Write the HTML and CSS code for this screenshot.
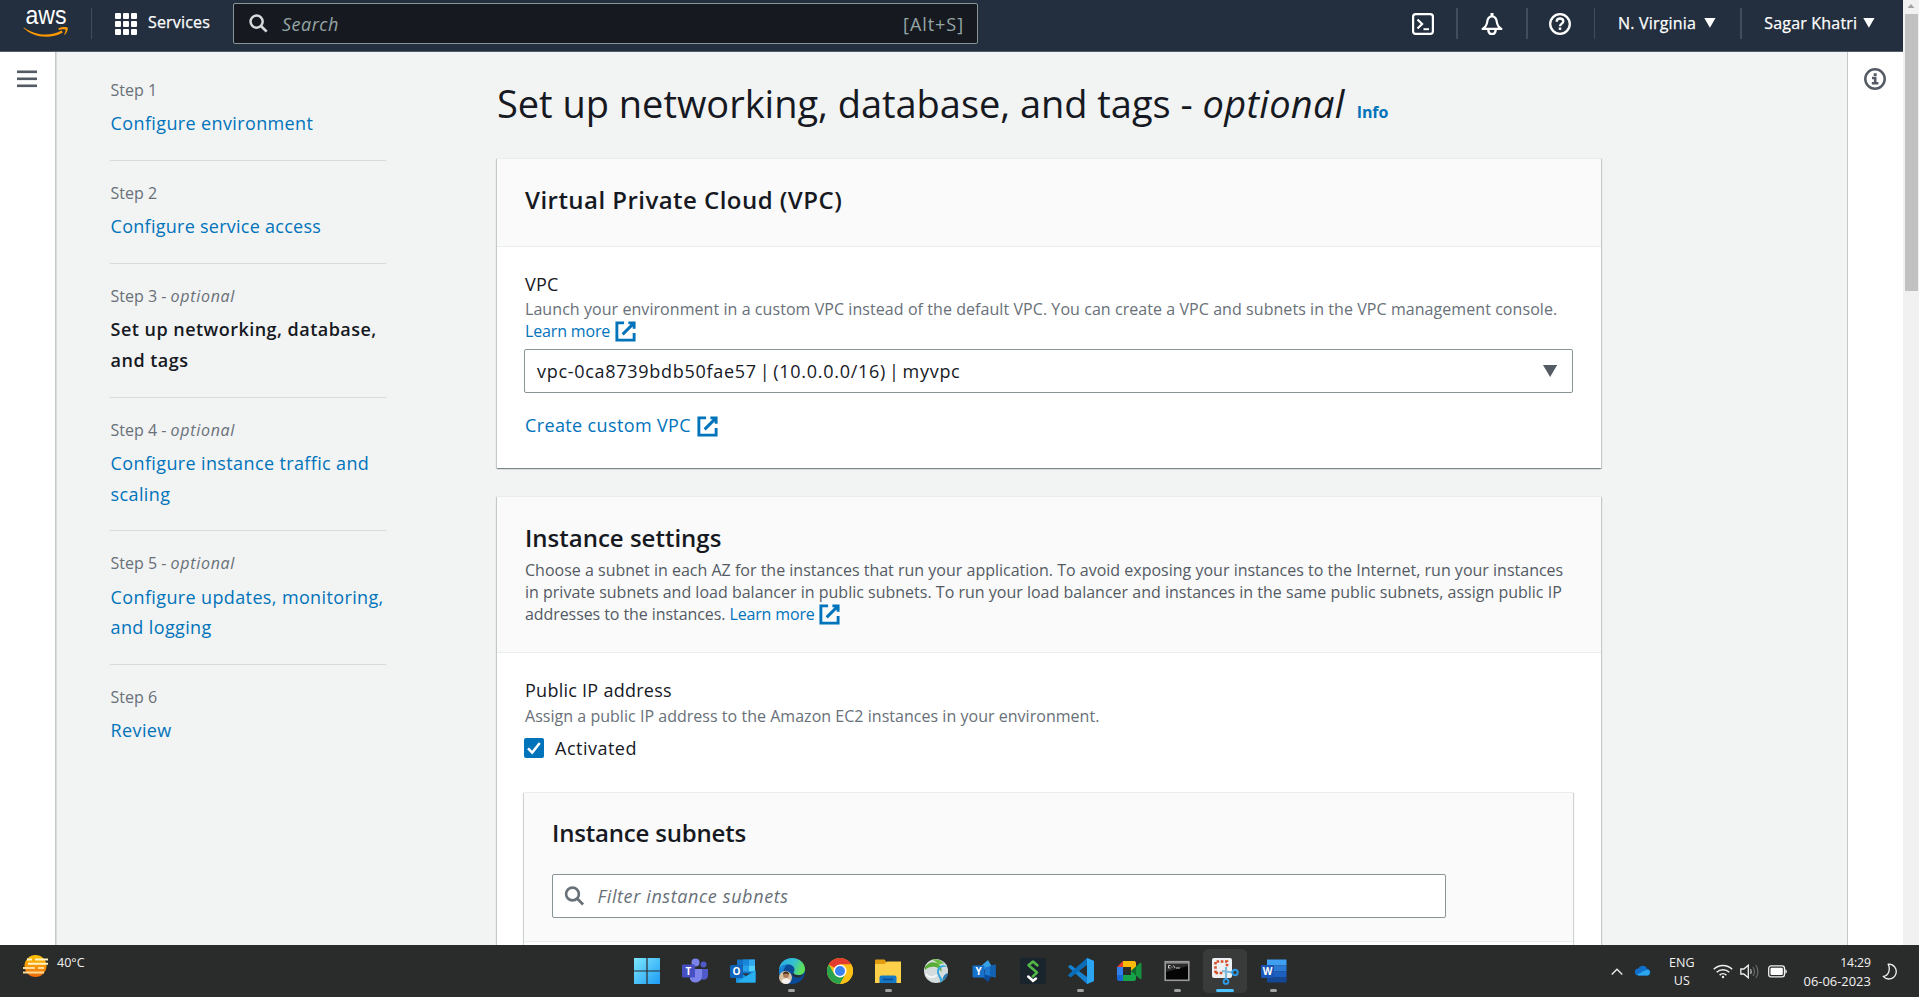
FILE: index.html
```html
<!DOCTYPE html>
<html lang="en">
<head>
<meta charset="utf-8">
<title>Elastic Beanstalk - Set up networking, database, and tags</title>
<link rel="stylesheet" href="styles.css">
</head>
<body>
<svg class="defs" aria-hidden="true">
  <symbol id="external" viewBox="0 0 16 16"><path d="M10 2h4v4M6 10l8-8M14 9.05V14H2V2h5" fill="none" stroke="currentColor" stroke-width="2"/></symbol>
  <symbol id="search" viewBox="0 0 20 20"><circle cx="8" cy="8" r="6.4" fill="none" stroke="currentColor" stroke-width="2.6"/><path d="M12.6 12.6l6 6" stroke="currentColor" stroke-width="2.8"/></symbol>
</svg>
<div class="screen">
  <div class="browser">
    <div class="app">
      <header class="topbar">
        <svg class="logo" width="46" height="32" viewBox="0 0 46 32">
          <text x="2.5" y="17.500" textLength="41" lengthAdjust="spacingAndGlyphs" class="logo-text">aws</text>
          <path d="M1 21.500c11 8.300 27 9.300 37.500 3l1.300 1.900c-12.500 7.200-29.500 5.400-39.500-4.600z" fill="#f90"/>
          <path d="M35.500 22.200c3-1.500 8-1.700 9-.7 1 1.200-.5 5.800-3.500 7.800 1-2.500 2-5 1.400-5.700-.7-.8-3.800-.4-6.900.2z" fill="#f90"/>
        </svg>
        <span class="rule rule-thin rule-logo"></span>
        <button class="services">
          <svg width="22" height="22" viewBox="0 0 22 22" fill="#fff"><rect width="6" height="6" rx="1"/><rect x="8" width="6" height="6" rx="1"/><rect x="16" width="6" height="6" rx="1"/><rect y="8" width="6" height="6" rx="1"/><rect x="8" y="8" width="6" height="6" rx="1"/><rect x="16" y="8" width="6" height="6" rx="1"/><rect y="16" width="6" height="6" rx="1"/><rect x="8" y="16" width="6" height="6" rx="1"/><rect x="16" y="16" width="6" height="6" rx="1"/></svg>
          <span>Services</span>
        </button>
        <div class="top-search">
          <svg width="19" height="19"><use href="#search"/></svg>
          <span class="top-search-text">Search</span>
          <span class="top-search-key">[Alt+S]</span>
        </div>
        <div class="top-actions">
          <svg width="22" height="22" viewBox="0 0 22 22" fill="none" stroke="#fff" stroke-width="2.200"><rect x="1.100" y="1.100" width="19.800" height="19.800" rx="2.600"/><path d="M5.500 6.500l4.600 4.500-4.600 4.500"/><path d="M11.500 16.200h5.500" stroke-width="2"/></svg>
          <span class="rule rule-a"></span>
          <svg width="22" height="22" viewBox="0 0 22 22" fill="none" stroke="#fff" stroke-width="2.200"><path d="M11 0v3" stroke-width="3"/><path d="M1.600 15.900c3.500-2 4.200-4 4.600-7C6.600 5.500 8.300 3.300 11 3.300s4.400 2.200 4.800 5.600c.4 3 1.100 5 4.600 7z" stroke-linejoin="round"/><path d="M7.400 16v1.500a3.600 3.600 0 0 0 7.200 0V16" stroke-width="2.400"/></svg>
          <span class="rule rule-b"></span>
          <svg width="22" height="22" viewBox="0 0 22 22" fill="none" stroke="#fff" stroke-width="2.300"><circle cx="11" cy="11" r="9.800"/><path d="M7.700 8.800c0-2.200 1.400-3.300 3.300-3.300s3.300 1.100 3.300 2.900c0 2.200-3.300 2.200-3.300 4.900"/><path d="M11 14.500v2.400" stroke-width="2.500"/></svg>
          <span class="rule rule-thin rule-c"></span>
          <span class="menu menu-region">N. Virginia <svg width="12" height="10"><path d="M0.300 0h11.200L5.900 9.800z" fill="#fff"/></svg></span>
          <span class="rule rule-d"></span>
          <span class="menu menu-user">Sagar Khatri <svg width="12" height="10"><path d="M0.300 0h11.200L5.900 9.800z" fill="#fff"/></svg></span>
        </div>
      </header>

      <div class="workspace">
        <aside class="rail rail-left">
          <svg width="20" height="18" viewBox="0 0 20 18" fill="#545b64"><rect y="0.500" width="20" height="2.600"/><rect y="7.500" width="20" height="2.600"/><rect y="14.500" width="20" height="2.600"/></svg>
        </aside>

        <nav class="steps">
          <div class="step"><div class="step-no">Step 1</div><a class="step-link">Configure environment</a></div>
          <div class="step"><div class="step-no">Step 2</div><a class="step-link step-link-snug">Configure service access</a></div>
          <div class="step"><div class="step-no">Step 3 - <em>optional</em></div><b class="step-link step-current">Set up networking, database,<br>and tags</b></div>
          <div class="step"><div class="step-no">Step 4 - <em>optional</em></div><a class="step-link">Configure instance traffic and<br>scaling</a></div>
          <div class="step"><div class="step-no">Step 5 - <em>optional</em></div><a class="step-link">Configure updates, monitoring,<br>and logging</a></div>
          <div class="step"><div class="step-no">Step 6</div><a class="step-link">Review</a></div>
        </nav>

        <main class="content">
          <h1 class="page-title">Set up networking, database, and tags - <em>optional</em><a class="info">Info</a></h1>

          <section class="card card-vpc">
            <div class="card-head"><h2 class="card-title card-title-wide">Virtual Private Cloud (VPC)</h2></div>
            <div class="card-body">
              <div class="label">VPC</div>
              <p class="hint hint-vpc">Launch your environment in a custom VPC instead of the default VPC. You can create a VPC and subnets in the VPC management console.<br><a class="link link-small">Learn more<svg class="ext" width="23" height="23"><use href="#external"/></svg></a></p>
              <div class="select"><span>vpc-0ca8739bdb50fae57 | (10.0.0.0/16) | myvpc</span><svg width="14" height="12"><path d="M0 0h14.200L7.100 12z" fill="#545b64"/></svg></div>
              <a class="link link-create">Create custom VPC<svg class="ext" width="23" height="23"><use href="#external"/></svg></a>
            </div>
          </section>

          <section class="card">
            <div class="card-head card-head-text">
              <h2 class="card-title">Instance settings</h2>
              <p class="card-desc">Choose a subnet in each AZ for the instances that run your application. To avoid exposing your instances to the Internet, run your instances<br>in private subnets and load balancer in public subnets. To run your load balancer and instances in the same public subnets, assign public IP<br><span class="desc-tail">addresses to the instances. </span><a class="link link-small">Learn more<svg class="ext" width="23" height="23"><use href="#external"/></svg></a></p>
            </div>
            <div class="card-body">
              <div class="label">Public IP address</div>
              <p class="hint">Assign a public IP address to the Amazon EC2 instances in your environment.</p>
              <div class="check"><span class="box"><svg width="20" height="20" viewBox="0 0 20 20"><path d="M4 10.400l4.200 4.200L15.800 5" fill="none" stroke="#fff" stroke-width="2.500"/></svg></span><span>Activated</span></div>
              <div class="card inner">
                <div class="inner-head">
                  <h2 class="card-title card-title-tight">Instance subnets</h2>
                  <div class="filter"><svg width="21" height="20"><use href="#search"/></svg><span>Filter instance subnets</span></div>
                </div>
              </div>
            </div>
          </section>
        </main>

        <aside class="rail rail-right">
          <svg width="22" height="22" viewBox="0 0 22 22" fill="none" stroke="#545b64"><circle cx="11" cy="11" r="9.700" stroke-width="2.500"/><path d="M9.700 6.600h3M8 10h3.200v5.300M7.800 15.300h6.600" stroke-width="2.600"/></svg>
        </aside>
      </div>
    </div>
    <div class="scrollbar"><svg width="16" height="14"><path d="M4.500 8L8 4l3.500 4z" fill="#a3a3a3"/></svg><div class="thumb"></div></div>
  </div>

  <footer class="taskbar">
    <div class="weather">
      <svg width="27" height="24" viewBox="0 0 27 24"><defs><linearGradient id="sun" x1="0" y1="0" x2="0" y2="1"><stop offset="0" stop-color="#fdc500"/><stop offset="1" stop-color="#ee6a0c"/></linearGradient></defs><circle cx="13.500" cy="12" r="11" fill="url(#sun)"/><path d="M5 5.500h5M13 5.500h13M6 9.700h20" stroke="#fff3c4" stroke-width="2"/><path d="M1 14h12M16 14h6M1 18.500h21" stroke="#ffdc9a" stroke-width="2"/></svg>
      <span>40°C</span>
    </div>
    <div class="tasks">
      <div class="task"><svg width="26" height="26" viewBox="0 0 26 26"><defs><linearGradient id="win" x1="0" y1="0" x2="1" y2="1"><stop offset="0" stop-color="#7ce9fd"/><stop offset="1" stop-color="#1e9bf5"/></linearGradient></defs><path d="M0 0h12.400v12.400H0zM13.600 0H26v12.400H13.600zM0 13.600h12.400V26H0zM13.600 13.600H26V26H13.600z" fill="url(#win)"/></svg></div>
      <div class="task"><svg width="26" height="26" viewBox="0 0 26 26"><circle cx="21.500" cy="6.500" r="3" fill="#5059c9"/><path d="M18 11h8v6.500a4.500 4.500 0 0 1-8 2.500z" fill="#5059c9"/><circle cx="13.500" cy="4.500" r="4" fill="#7b83eb"/><path d="M8 11h12v7a6.500 6.500 0 0 1-12 3.500z" fill="#7b83eb"/><rect y="6.500" width="13" height="13" rx="1.200" fill="#474fc4"/><text x="6.500" y="17" class="tile-letter">T</text></svg></div>
      <div class="task"><svg width="26" height="26" viewBox="0 0 26 26"><rect x="7" y="1.500" width="18" height="14" rx="1" fill="#1272c4"/><path d="M13 1.500h6v6h-6z" fill="#1a86d9"/><path d="M19 1.500h6v6h-6z" fill="#32a9ec"/><path d="M13 7.500h6v6h-6z" fill="#28a0e8"/><path d="M19 7.500h6v6h-6z" fill="#50d1fb"/><path d="M6 12l10 6 9.500-6v12.500H6z" fill="#1593e0"/><path d="M6 24.500L25.500 13v11.500z" fill="#28b0f0"/><rect x="0" y="7" width="13" height="13" rx="1.200" fill="#0f63b8"/><text x="6.500" y="17.200" class="tile-letter">O</text></svg></div>
      <div class="task"><svg width="26" height="26" viewBox="0 0 26 26"><defs><linearGradient id="edge" x1="0" y1="0" x2="1" y2=".3"><stop offset="0" stop-color="#2aa9e6"/><stop offset=".6" stop-color="#35c1d0"/><stop offset="1" stop-color="#5fe05a"/></linearGradient></defs><circle cx="13" cy="13" r="13" fill="#0b4a97"/><path d="M0 13C0 5 6 0 13 0c8 0 13 5.500 13 11 0 4-3 6-6.500 6-3 0-5-1-5-2s1-1.500 1-3.500c0-3-3-5-6.500-5C4 6.500 1 9 0 13z" fill="url(#edge)"/><path d="M0 13c1-4 4-6.500 8.500-6.500-3 2-4.500 5-4 9 .5 4.500 3 8 7 10.400C5 25 0 20 0 13z" fill="#1683d3"/><path d="M14.500 15c0 1 2 2.500 5 2.500 2.500 0 4.500-.7 5.500-1.700-1.500 3-5 4.400-8.500 3.400-3-.8-4-3-2-4.200z" fill="#2b2c2c"/><circle cx="6.500" cy="19.500" r="6.500" fill="#d8c3a5"/><circle cx="7" cy="17" r="2.900" fill="#b07a55"/><path d="M4 16.500c0-4 6-4 6 0-2-1.500-4-1.500-6 0z" fill="#3a2a20"/><path d="M2.500 24c.5-5 8.500-5 9 0-3 2.500-6 2.500-9 0z" fill="#f7f1ee"/></svg><i class="dot"></i></div>
      <div class="task"><svg width="26" height="26" viewBox="0 0 26 26"><circle cx="13" cy="13" r="13" fill="#fbc116"/><path d="M13 13L1.740 6.500A13 13 0 0 1 24.260 6.500H13z" fill="#e33b2e"/><path d="M13 26A13 13 0 0 1 1.740 6.500L7.400 16.200 13 19.500l5.600-3.300z" fill="#2ba24c"/><path d="M13 6.500h11.260A13 13 0 0 1 13 26l5.630-9.750z" fill="#fbc116"/><circle cx="13" cy="13" r="6.500" fill="#fff"/><circle cx="13" cy="13" r="5" fill="#3b82f0"/></svg></div>
      <div class="task"><svg width="26" height="26" viewBox="0 0 26 26"><path d="M0 2.500Q0 1.500 1 1.500h8.500l2 2.500v5H0z" fill="#e29c12"/><path d="M0 6h9.500l2.500-2.500H26V25H0z" fill="#ffd04a"/><path d="M4.500 25v-5.500a2 2 0 0 1 2-2h13a2 2 0 0 1 2 2V25z" fill="#1678c9"/><path d="M8 20.500h10v1.800H8z" fill="#0c4f94"/></svg><i class="dot"></i></div>
      <div class="task"><svg width="26" height="26" viewBox="0 0 26 26"><circle cx="13" cy="13" r="12" fill="#d5dcde"/><path d="M2 9C6 3 12 3 16 7c2 2 3 4 2.500 7-2-3-3.500-4.500-6-5C9 8.300 5 9 2 12z" fill="#58ab35"/><path d="M9 1.700c5-1.200 10 .8 12.500 4.300-3-1-5 0-6 2-1-3-3-5-6.500-6.300z" fill="#6cbb45"/><path d="M24.500 9c-4-1-8 .5-8.500 4-.5 4 3 6 4 10l-3 1.500c1-4-3-6-3-11C14 8 20 5 24.500 9z" fill="#35a9dc"/><path d="M24.800 15c-3 1-5 3-5.300 7.500 3-1.500 5-4 5.300-7.500z" fill="#2579b5"/><path d="M3 16c3 4 7 4 11 1" fill="none" stroke="#f4f7f8" stroke-width="2"/></svg></div>
      <div class="task"><svg width="26" height="26" viewBox="0 0 26 26"><path d="M10 8l7-6 3.500 6-5.500 5z" fill="#35a2e8"/><path d="M10 18l7 6 3.500-6-5.500-5z" fill="#0b4c9c"/><path d="M14 9.500l10.500-3v13l-10.500-3z" fill="#1c78d0"/><path d="M19 8l5.500-1.500v13L19 18z" fill="#1262b6"/><rect x="1.500" y="7.500" width="12" height="12" rx="1" fill="#1571c9"/><text x="7.500" y="17.300" class="tile-letter">Y</text></svg></div>
      <div class="task"><svg width="26" height="26" viewBox="0 0 26 26"><rect width="26" height="26" rx="2" fill="#19242d"/><path d="M17.500 7.500L13 3.500 8.500 7.200l8.500 7.300-4.200 4" fill="none" stroke="#54b848" stroke-width="2.500" stroke-linecap="round" stroke-linejoin="round"/><path d="M8.200 18.500l4.800 4.300 3-2.300" fill="none" stroke="#fff" stroke-width="2.500" stroke-linecap="round"/></svg></div>
      <div class="task"><svg width="26" height="26" viewBox="0 0 26 26"><path d="M19 0l7 3v20l-7 3L1 9.800 0 8.500l2.500-1.800L19 19z" fill="#1583d2"/><path d="M19 0v7L2.500 19.500 0 17.500 1 16z" fill="#0b6cb8"/><path d="M19 0l7 3v20l-7 3z" fill="#2ba5f2"/></svg><i class="dot"></i></div>
      <div class="task"><svg width="26" height="26" viewBox="0 0 26 26"><path d="M1 9l6-6v6z" fill="#e53c2f"/><path d="M7 3h11a2 2 0 0 1 2 2v6l-5 3V9H7z" fill="#fbba08"/><path d="M1 9h6v8H1z" fill="#2f80ed"/><path d="M1 17h6v6H3a2 2 0 0 1-2-2z" fill="#1967d2"/><path d="M7 17h8v-3l5-2v9a2 2 0 0 1-2 2H7z" fill="#16a34a"/><path d="M15 13l9-8c.7-.5 1.500 0 1.500.800v14.400c0 .8-.8 1.300-1.500.8z" fill="#16923f"/><path d="M15 13l5-4.500v9z" fill="#0a6b2c"/></svg></div>
      <div class="task"><svg width="26" height="26" viewBox="0 0 26 26"><rect x="1.200" y="3.700" width="23.600" height="18.600" fill="#050505" stroke="#9a9a9a" stroke-width="1.600"/><path d="M2 5h22" stroke="#c9c9c9" stroke-width="1"/><path d="M2 14L24 8v-2H2z" fill="#2a2a2a"/><path d="M6.500 7.500h-2v2.500h2M8 8v.5M8 9.500v.5M9.500 7.500l1.500 2.500M12 10h4" stroke="#ddd" stroke-width=".9" fill="none"/></svg><i class="dot"></i></div>
      <div class="task task-active"><svg width="28" height="28" viewBox="0 0 28 28"><rect x="1" y="1" width="20" height="20" rx="2" fill="#eef1f4"/><path d="M4.500 16V4.500H16V11" fill="none" stroke="#d4502c" stroke-width="2.600" stroke-dasharray="2.600 1.600"/><path d="M4.500 16h8" stroke="#d4502c" stroke-width="2.400" stroke-dasharray="2.600 1.600"/><path d="M11 14l11 1.500M15 10v12" stroke="#7fb7d8" stroke-width="2.200"/><circle cx="24" cy="15.500" r="2.700" fill="none" stroke="#2d9be6" stroke-width="1.900"/><circle cx="15" cy="24.500" r="2.400" fill="none" stroke="#2d9be6" stroke-width="1.900"/></svg><i class="dot dot-active"></i></div>
      <div class="task"><svg width="26" height="26" viewBox="0 0 26 26"><path d="M6 1.500h19.500v6H6z" fill="#3f9ff0"/><path d="M6 7.500h19.500v6H6z" fill="#2a7bd6"/><path d="M6 13.500h19.500v6H6z" fill="#1b5fc0"/><path d="M6 19.500h19.500v5H6z" fill="#144794"/><rect y="7" width="13" height="13" rx="1.200" fill="#1c56b4"/><text x="6.500" y="17.300" class="tile-letter">W</text></svg><i class="dot"></i></div>
    </div>
    <div class="tray">
      <svg class="tray-chevron" width="12" height="7" viewBox="0 0 12 7"><path d="M.7 6.500L6 1.200l5.300 5.300" fill="none" stroke="#eee" stroke-width="1.300"/></svg>
      <svg class="tray-cloud" width="16" height="11" viewBox="0 0 16 11"><path d="M3.500 10.500a3.500 3.500 0 0 1-.3-7A5 5 0 0 1 12.300 4a3.300 3.300 0 0 1 .4 6.500z" fill="#0f6fc9"/><path d="M3.500 10.500L2 9.800 9 5.700l4-1.200a3.200 3.200 0 0 1-.3 6z" fill="#2ba6ee"/></svg>
      <div class="tray-lang"><span>ENG</span><span>US</span></div>
      <svg class="tray-wifi" width="20" height="15" viewBox="0 0 20 15" fill="none" stroke="#f0f0f0" stroke-width="1.500"><path d="M.8 5.300a13 13 0 0 1 18.400 0M3.700 8.300a9 9 0 0 1 12.600 0M6.600 11.100a5 5 0 0 1 6.800 0"/><circle cx="10" cy="13" r="1.200" fill="#f0f0f0" stroke="none"/></svg>
      <svg class="tray-sound" width="20" height="15" viewBox="0 0 20 15" fill="none" stroke="#f0f0f0" stroke-width="1.300"><path d="M.8 5h3L8.300 1.200v12.600L3.800 10h-3z"/><path d="M10.500 5q1.500 2.500 0 5" stroke="#aaa"/><path d="M13 3q3 4.500 0 9M15.800 1q4.200 6.500 0 13" stroke="#666"/></svg>
      <svg class="tray-battery" width="20" height="13" viewBox="0 0 20 13"><rect x=".7" y=".9" width="15.800" height="11" rx="2.400" fill="none" stroke="#f0f0f0" stroke-width="1.300"/><rect x="2.500" y="2.700" width="12.300" height="7.400" rx="1" fill="#fff"/><path d="M17.300 4.200q1.500.3 1.500 2.300t-1.500 2.300z" fill="#f0f0f0"/></svg>
      <div class="tray-clock"><span class="time">14:29</span><span>06-06-2023</span></div>
      <svg class="tray-moon" width="16" height="17" viewBox="0 0 16 17"><path d="M6.200 1.200a7.400 7.400 0 1 1-5 12.200C6.500 12.500 8.700 7 6.200 1.200z" fill="none" stroke="#f0f0f0" stroke-width="1.300" stroke-linejoin="round"/></svg>
    </div>
  </footer>
</div>
</body>
</html>
```

FILE: styles.css
```css
* { box-sizing: border-box; }
body { margin: 0; font-family: "Open Sans", "Noto Sans", sans-serif; color: #16191f; overflow: hidden; }
svg { display: block; flex: none; }
h1, h2, p { margin: 0; font-weight: 400; }
.defs { display: none; }

.screen { width: 1919px; height: 997px; display: flex; flex-direction: column; overflow: hidden; }
.browser { height: 945px; display: flex; overflow: hidden; }
.app { width: 1903px; display: flex; flex-direction: column; }

/* Top navigation */
.topbar { height: 52px; flex: none; display: flex; align-items: flex-start; background: #232f3e; border-bottom: 1px solid #545b64; color: #fff; }
.logo { margin: 6px 0 0 23px; overflow: visible; }
.logo-text { font-family: "Liberation Sans", sans-serif; font-size: 25px; fill: #fff; }
.rule { flex: none; width: 2px; height: 31px; margin-top: 8px; background: #414d5c; }
.rule-thin { width: 1px; }
.rule-logo { margin-left: 22px; }
.services { display: flex; align-items: flex-start; gap: 11px; margin: 13px 0 0 23px; padding: 0; border: 0; background: none; color: #fff; font: 16px/20px "Open Sans", sans-serif; letter-spacing: .17px; width: 118px; -webkit-text-stroke: .25px #fff; }
.services span { margin-top: -1px; }
.top-search { width: 745px; height: 41px; margin: 3px 0 0 0; padding: 0 13px 0 15px; display: flex; align-items: center; border: 1px solid #879596; border-radius: 2px; background: #16191f; color: #d5dbdb; }
.top-search-text { margin-left: 14px; font-size: 18px; font-style: italic; letter-spacing: .5px; color: #95a5a6; }
.top-search-key { margin-left: auto; font-size: 18px; letter-spacing: .95px; color: #95a5a6; }
.top-actions { display: flex; align-items: flex-start; margin-left: 434px; }
.top-actions > svg { margin-top: 13px; }
.rule-a { margin-left: 22px; margin-right: 23px; }
.rule-b { margin-left: 23px; margin-right: 21px; }
.rule-c { margin-left: 23px; margin-right: 23px; }
.rule-d { margin-left: 24px; margin-right: 22px; }
.menu { display: flex; align-items: center; gap: 8px; margin-top: 13px; font-size: 16px; line-height: 20px; letter-spacing: .2px; white-space: nowrap; -webkit-text-stroke: .25px #fff; }
.menu-user { gap: 6px; }

/* Page frame */
.workspace { flex: 1; min-height: 0; display: flex; background: #f2f3f3; overflow: hidden; }
.rail { flex: none; background: #fff; }
.rail-left { width: 56px; padding: 18px 0 0 17px; border-right: 1px solid #c3c8c9; box-shadow: 1px 0 1px rgba(0, 28, 36, .1); }
.rail-right { width: 56px; margin-left: auto; padding: 16px 0 0 16px; border-left: 1px solid #c3c8c9; }

/* Wizard steps */
.steps { width: 276px; margin-left: 54px; padding-top: 27px; flex: none; }
.step { margin-bottom: 21px; padding: 0 0 21px .600px; border-bottom: 1px solid #d5dbdb; }
.step:last-child { border: 0; }
.step-no { margin-bottom: 7.400px; font-size: 16px; line-height: 22px; color: #687078; }
.step-no em { letter-spacing: .7px; }
.step-link { display: block; font-size: 18px; line-height: 30.600px; letter-spacing: .37px; color: #0073bb; white-space: nowrap; }
.step-link-snug { letter-spacing: .26px; }
.step-current { font-weight: 600; letter-spacing: .47px; color: #16191f; }

/* Content */
.content { width: 1104px; margin-left: 111px; flex: none; }
.page-title { margin: 27px 0 31px; font-size: 38px; line-height: 48px; letter-spacing: -.03px; white-space: nowrap; }
.page-title em { letter-spacing: .3px; }
.info { margin-left: 12px; font-size: 16px; line-height: 1; font-weight: 700; letter-spacing: -.1px; color: #0073bb; }
.card { background: #fff; border-top: 1px solid #eaeded; box-shadow: 0 1px 1px rgba(0, 28, 36, .3), 1px 1px 1px rgba(0, 28, 36, .15), -1px 1px 1px rgba(0, 28, 36, .15); }
.card-vpc { height: 310px; margin-bottom: 28px; }
.card-head { height: 88px; padding: 25.500px 28px 0; background: #fafafa; border-bottom: 1px solid #eaeded; }
.card-head-text { height: 156px; }
.card-title { font-size: 24px; line-height: 30px; font-weight: 600; }
.card-title-wide { letter-spacing: .46px; }
.card-title-tight { letter-spacing: -.19px; }
.card-desc { margin-top: 6.300px; font-size: 16px; line-height: 22px; letter-spacing: .005px; color: #545b64; white-space: nowrap; }
.desc-tail { letter-spacing: -.08px; }
.card-body { padding: 26px 28px 0; }
.label { font-size: 18px; line-height: 22px; letter-spacing: .26px; }
.hint { margin-top: 3.600px; font-size: 16px; line-height: 22px; letter-spacing: .03px; color: #687078; white-space: nowrap; }
.hint-vpc { margin-top: 3px; letter-spacing: .065px; }
.link { color: #0073bb; }
.link-small { letter-spacing: -.15px; }
.ext { display: inline-block; margin: -3px 0 -3px 3.500px; vertical-align: -3px; }
.select { width: 1049px; height: 44px; margin: 7px 0 20px -1px; padding: 0 15px 0 12px; display: flex; align-items: center; justify-content: space-between; border: 1px solid #879596; border-radius: 2px; font-size: 18px; letter-spacing: .71px; word-spacing: -2.400px; }
.link-create { display: block; font-size: 18px; line-height: 24px; letter-spacing: .37px; }
.link-create .ext { margin-left: 4.500px; }
.check { display: flex; align-items: center; gap: 11px; margin: 9.800px 0 31.600px -1px; font-size: 18px; line-height: 24px; letter-spacing: .5px; }
.box { width: 20px; height: 20px; border-radius: 2px; background: #0073bb; }
.inner { margin: 0 0 0 -1px; height: 300px; }
.inner-head { height: 149px; padding: 25.500px 28px 0; background: #fafafa; border-bottom: 1px solid #eaeded; }
.filter { width: 894px; height: 44px; margin-top: 26px; padding-left: 11px; display: flex; align-items: center; gap: 12.500px; background: #fff; border: 1px solid #879596; border-radius: 2px; color: #687078; }
.filter span { font-size: 18px; font-style: italic; letter-spacing: .62px; }

/* Browser scrollbar */
.scrollbar { width: 16px; background: #f1f1f1; }
.thumb { width: 13px; height: 277px; margin-left: 2px; background: #c1c1c1; }

/* Desktop taskbar */
.taskbar { height: 52px; display: grid; grid-template-columns: 623px 674.800px 1fr; background: #2a2b2b; color: #f2f2f2; font-size: 12.900px; }
.weather { display: flex; align-items: flex-start; gap: 8px; padding: 9px 0 0 22px; font-size: 12.500px; line-height: 18px; }
.tasks { display: flex; }
.task { width: 48.200px; display: flex; flex-direction: column; align-items: center; padding-top: 13px; }
.task-active { width: 44px; height: 44px; margin: 4px 2.100px 0; padding-top: 8px; border-radius: 5px; background: #393a3a; }
.dot { width: 7px; height: 3px; margin-top: 5px; border-radius: 2px; background: #a2a2a2; }
.dot-active { width: 18px; margin-top: 4px; background: #4cc2ff; }
.tile-letter { font: 700 10px "Open Sans", sans-serif; fill: #fff; text-anchor: middle; }
.tray { display: flex; align-items: flex-start; line-height: 18px; }
.tray-chevron { margin: 23px 0 0 313px; }
.tray-cloud { margin: 20px 0 0 12px; }
.tray-lang { width: 32px; margin: 9px 0 0 15px; display: flex; flex-direction: column; align-items: center; font-size: 12.500px; }
.tray-wifi { margin: 19px 0 0 15px; }
.tray-sound { margin: 19px 0 0 7px; }
.tray-battery { margin: 20px 0 0 8px; }
.tray-clock { width: 72px; margin: 9px 0 0 11px; display: flex; flex-direction: column; align-items: flex-end; }
.time { font-size: 12.200px; letter-spacing: -.1px; }
.tray-moon { margin: 18px 0 0 11px; }
```
